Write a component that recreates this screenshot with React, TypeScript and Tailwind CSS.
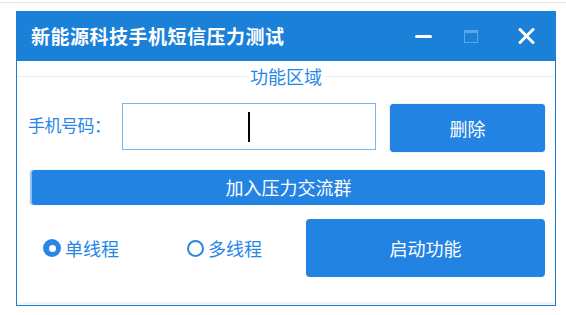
import { useState } from 'react'

const font = { fontFamily: '"Noto Sans CJK SC", "Noto Sans", sans-serif' }

function Radio({ checked, label, onClick }: { checked: boolean; label: string; onClick: () => void }) {
  return (
    <button onClick={onClick} className="flex items-center gap-[4px] text-[18px] text-[#2787e8]">
      {checked ? (
        <span className="flex h-[18px] w-[18px] items-center justify-center rounded-full bg-[#2a86e6]">
          <span className="h-[7px] w-[7px] rounded-full bg-white" />
        </span>
      ) : (
        <span className="h-[17px] w-[17px] rounded-full border-2 border-[#2a86e6] bg-white" />
      )}
      <span className="leading-none">{label}</span>
    </button>
  )
}

function App() {
  const [multi, setMulti] = useState(false)

  return (
    <div className="h-[315px] w-[566px] overflow-hidden bg-white" style={font}>
      <div className="mt-[2px] h-px w-full bg-[#e6e6e6]" />
      <div className="ml-[16px] mt-[8px] w-[540px]">
        {/* title bar */}
        <div className="flex h-[50px] items-center bg-[#1b80d8] pl-[15px]">
          <h1 className="text-[19px] font-bold tracking-[0.5px] text-white">新能源科技手机短信压力测试</h1>
          <div className="ml-auto flex items-center">
            <span className="mr-[32px] h-[3px] w-[17px] rounded-full bg-white" />
            <span className="mr-[40px] h-[13px] w-[14px] border border-t-[3px] border-white/30" />
            <svg width="17" height="16" viewBox="0 0 17 16" className="mr-[21px]">
              <path d="M2 1.5 L15 14.5 M15 1.5 L2 14.5" stroke="white" strokeWidth="3" strokeLinecap="round" />
            </svg>
          </div>
        </div>

        {/* body */}
        <div className="flex h-[245px] flex-col border-x border-b border-[#1b80d8]">
          <div className="mt-[3px] flex h-[24px] items-center">
            <div className="h-px flex-1 bg-[#ececec]" />
            <span className="px-[3px] text-[18px] leading-none text-[#2787e8]">功能区域</span>
            <div className="h-px flex-1 bg-[#ececec]" />
          </div>

          <div className="mt-[15px] flex items-start pr-[10px]">
            <span className="ml-[11px] mt-[13px] text-[17px] leading-none tracking-[-0.5px] text-[#2787e8]">手机号码：</span>
            <div className="ml-[11px] flex h-[47px] w-[254px] items-center justify-center border border-[#7db4ea] bg-white">
              <span className="h-[30px] w-[2px] bg-black" />
            </div>
            <button className="ml-auto mt-[1px] h-[48px] w-[155px] rounded-[4px] bg-[#2383e2] text-[18px] text-white shadow-[0_0_1px_#2383e2]">
              删除
            </button>
          </div>

          <button className="ml-[15px] mr-[10px] mt-[18px] h-[35px] rounded-[3px] bg-[#2383e2] text-[18px] text-white shadow-[-2px_0_1px_#8bbdf0]">
            加入压力交流群
          </button>

          <div className="mt-[14px] flex items-center pr-[10px]">
            <div className="ml-[26px]">
              <Radio checked={!multi} label="单线程" onClick={() => setMulti(false)} />
            </div>
            <div className="ml-[68px]">
              <Radio checked={multi} label="多线程" onClick={() => setMulti(true)} />
            </div>
            <button className="ml-auto h-[58px] w-[239px] rounded-[4px] bg-[#2383e2] text-[18px] text-white">
              启动功能
            </button>
          </div>

          <div className="flex-1" />
          <div className="h-[3px] bg-[#f3f3f3]" />
        </div>
      </div>
    </div>
  )
}

export default App
